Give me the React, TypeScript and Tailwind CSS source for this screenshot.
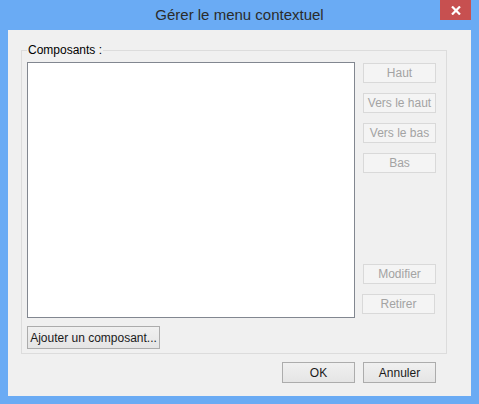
import React from "react";

const font = { fontFamily: '"Liberation Sans", Arial, sans-serif' };

function Btn({ label, disabled, className = "" }: { label: string; disabled?: boolean; className?: string }) {
  return (
    <button
      disabled={disabled}
      className={
        "w-[73px] flex items-center justify-center whitespace-nowrap text-[12px] leading-none border " +
        (disabled
          ? "border-[#d9d9d9] bg-[#f4f4f4] text-[#a3a3a3] "
          : "border-[#acacac] bg-gradient-to-b from-[#f0f0f0] to-[#e5e5e5] text-[#1a1a1a] ") +
        className
      }
    >
      {label}
    </button>
  );
}

export default function App() {
  return (
    <div className="w-[479px] h-[404px] bg-[#6aabf4] flex flex-col" style={font}>
      <div className="relative h-[30px] flex items-center justify-center shrink-0">
        <span className="text-[15px] text-[#2b2b2b] leading-none pb-[1px]">Gérer le menu contextuel</span>
        <div className="absolute top-0 right-[8px] w-[31px] h-[20px] bg-[#c75050] flex items-center justify-center">
          <svg width="10" height="9" viewBox="0 0 10 9">
            <path d="M1 0.5 L9 8.5 M9 0.5 L1 8.5" stroke="#ffffff" strokeWidth="2.2" />
          </svg>
        </div>
      </div>
      <div className="flex-1 mx-[8px] mb-[8px] bg-[#f0f0f0] flex flex-col">
        <fieldset className="mt-[12px] ml-[13px] mr-[24px] h-[312px] border border-[#dcdcdc] px-[5px] pb-[3px] pt-[4px] flex flex-col">
          <legend className="px-[1px] text-[12px] leading-[16px] text-black">Composants :</legend>
          <div className="flex flex-row">
            <div className="w-[328px] h-[256px] bg-white border border-[#828790]" />
            <div className="ml-[8px] pt-[1px] pb-[4px] flex flex-col">
              <div className="flex flex-col gap-[10px]">
                <Btn label="Haut" disabled className="h-[20px]" />
                <Btn label="Vers le haut" disabled className="h-[20px]" />
                <Btn label="Vers le bas" disabled className="h-[20px]" />
                <Btn label="Bas" disabled className="h-[20px]" />
              </div>
              <div className="flex-1" />
              <div className="flex flex-col gap-[10px]">
                <Btn label="Modifier" disabled className="h-[20px]" />
                <Btn label="Retirer" disabled className="h-[20px] -ml-[1px]" />
              </div>
            </div>
          </div>
          <div className="mt-[8px] flex">
            <Btn label="Ajouter un composant..." className="w-[133px] h-[23px]" />
          </div>
        </fieldset>
        <div className="mt-[8px] mr-[35px] flex justify-end gap-[8px]">
          <Btn label="OK" className="h-[21px]" />
          <Btn label="Annuler" className="h-[21px]" />
        </div>
      </div>
    </div>
  );
}
